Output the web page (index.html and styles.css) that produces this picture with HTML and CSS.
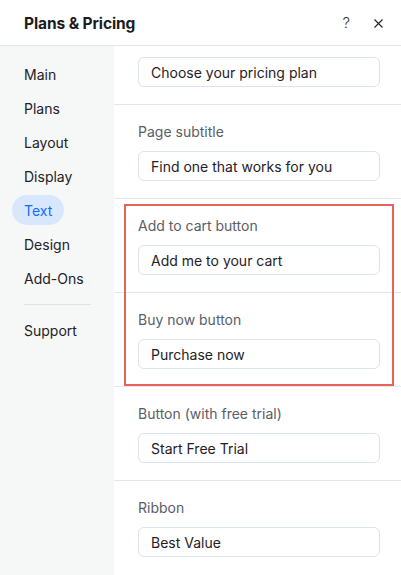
FILE: index.html
```html
<!DOCTYPE html>
<html>
<head>
<meta charset="utf-8">
<link rel="stylesheet" href="styles.css">
</head>
<body>
<div class="panel">
  <header class="header">
    <h1 class="title">Plans &amp; Pricing</h1>
    <div class="actions">
      <span class="help">?</span>
      <svg class="close" width="9" height="9" viewBox="0 0 9 9"><path d="M0.5 0.5L8.5 8.5M8.5 0.5L0.5 8.5" stroke="#222" stroke-width="1.1" fill="none"/></svg>
    </div>
  </header>
  <div class="body">
    <nav class="sidebar">
      <div class="nav-item">Main</div>
      <div class="nav-item">Plans</div>
      <div class="nav-item">Layout</div>
      <div class="nav-item">Display</div>
      <div class="nav-item active"><span class="pill">Text</span></div>
      <div class="nav-item">Design</div>
      <div class="nav-item">Add-Ons</div>
      <div class="nav-divider"></div>
      <div class="nav-item">Support</div>
    </nav>
    <main class="content">
      <section class="section first">
        <div class="input">Choose your pricing plan</div>
      </section>
      <section class="section">
        <div class="label">Page subtitle</div>
        <div class="input">Find one that works for you</div>
      </section>
      <div class="highlight-group">
        <section class="section">
          <div class="label">Add to cart button</div>
          <div class="input">Add me to your cart</div>
        </section>
        <section class="section">
          <div class="label">Buy now button</div>
          <div class="input">Purchase now</div>
        </section>
        <div class="highlight"></div>
      </div>
      <section class="section">
        <div class="label">Button (with free trial)</div>
        <div class="input">Start Free Trial</div>
      </section>
      <section class="section last">
        <div class="label">Ribbon</div>
        <div class="input">Best Value</div>
      </section>
    </main>
  </div>
</div>
</body>
</html>
```
FILE: styles.css
```css
* { box-sizing: border-box; }
html, body { margin: 0; padding: 0; }
body {
  width: 401px;
  height: 575px;
  overflow: hidden;
  background: #fff;
  font-family: "Inter", "Open Sans", sans-serif;
  color: #1f2126;
}
.panel { display: flex; flex-direction: column; height: 575px; }
.header {
  height: 46px;
  flex: none;
  display: flex;
  align-items: center;
  justify-content: space-between;
  padding: 0 18px 0 24px;
  border-bottom: 1px solid #e3e6ea;
}
.title {
  margin: 0;
  font-size: 15.5px;
  font-weight: 700;
  letter-spacing: -0.1px;
  color: #1a1c20;
  padding-top: 1px;
}
.actions { display: flex; align-items: center; gap: 24px; }
.help { font-size: 15px; font-weight: 300; color: #333; line-height: 1; }
.close { display: block; margin-top: 1px; }
.body { display: flex; flex: 1; min-height: 0; }
.sidebar {
  width: 114px;
  flex: none;
  background: #f6f7f7;
  padding-top: 11px;
}
.nav-item {
  height: 34px;
  display: flex;
  align-items: center;
  padding-left: 24px;
  font-size: 14px;
  color: #1f2126;
}
.nav-item.active { padding-left: 12px; }
.pill {
  display: inline-flex;
  align-items: center;
  height: 30px;
  padding: 0 12px;
  border-radius: 15px;
  background: #d9e7fd;
  color: #116dff;
}
.nav-divider {
  height: 1px;
  background: #dfe2e6;
  margin: 9px 23px 8px 24px;
}
.content { flex: 1; overflow: hidden; }
.section {
  height: 94px;
  padding: 18px 21px 0 24px;
  border-bottom: 1px solid #e3e6ea;
}
.section.first { height: 59px; padding-top: 11px; }
.section.last { border-bottom: none; }
.label {
  height: 18px;
  line-height: 18px;
  font-size: 14px;
  color: #5a5d66;
  margin-bottom: 10px;
}
.input {
  height: 30px;
  border: 1px solid #dde3ee;
  border-radius: 6px;
  padding: 0 12px;
  display: flex;
  align-items: center;
  font-size: 14px;
  color: #1f2126;
}
.highlight-group { position: relative; }
.highlight {
  position: absolute;
  top: 5px;
  left: 10px;
  right: 7px;
  bottom: 1px;
  border: 2px solid #e8625a;
  pointer-events: none;
}
```
